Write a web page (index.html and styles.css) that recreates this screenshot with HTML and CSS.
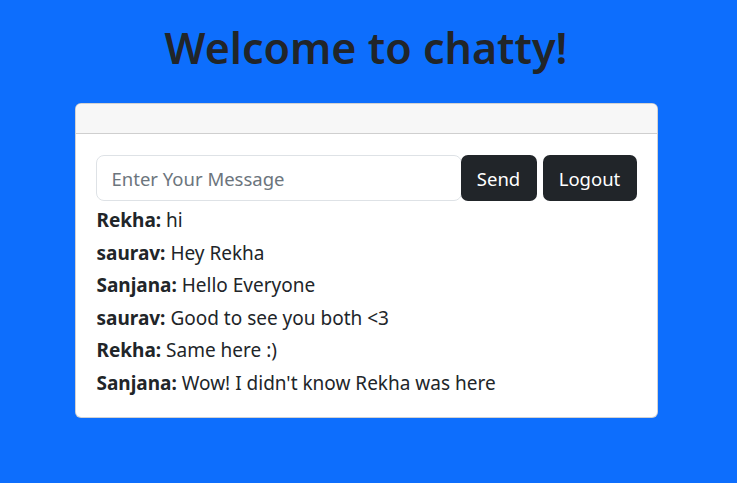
FILE: index.html
```html
<!DOCTYPE html>
<html>
<head>
<meta charset="utf-8">
<link rel="stylesheet" href="styles.css">
</head>
<body>
<div class="page">
  <h1 class="title">Welcome to chatty!</h1>
  <div class="card">
    <div class="card-header"></div>
    <div class="card-body">
      <div class="form-row">
        <input class="msg-input" type="text" placeholder="Enter Your Message">
        <button class="btn">Send</button>
        <button class="btn btn-logout">Logout</button>
      </div>
      <div class="messages">
        <div class="msg"><b>Rekha:</b> hi</div>
        <div class="msg"><b>saurav:</b> Hey Rekha</div>
        <div class="msg"><b>Sanjana:</b> Hello Everyone</div>
        <div class="msg"><b>saurav:</b> Good to see you both &lt;3</div>
        <div class="msg"><b>Rekha:</b> Same here :)</div>
        <div class="msg"><b>Sanjana:</b> Wow! I didn't know Rekha was here</div>
      </div>
    </div>
  </div>
</div>
</body>
</html>
```
FILE: styles.css
```css
html, body {
  margin: 0;
  padding: 0;
  height: 100%;
}
body {
  background: #0d6efd;
  font-family: "Noto Sans", "Open Sans", sans-serif;
  color: #212529;
}
.page {
  display: flex;
  flex-direction: column;
  align-items: center;
  padding-top: 18px;
  padding-right: 5px;
}
.title {
  margin: 0;
  font-size: 43px;
  font-weight: 600;
  line-height: 60px;
  color: #212529;
}
.card {
  margin-top: 25px;
  width: 583px;
  box-sizing: border-box;
  background: #fff;
  border: 1px solid rgba(0,0,0,0.175);
  border-radius: 6px;
  overflow: hidden;
}
.card-header {
  height: 29px;
  background: #f7f7f7;
  border-bottom: 1px solid #cfcfcf;
}
.card-body {
  padding: 21px 20px 18px 20px;
}
.form-row {
  display: flex;
  gap: 6px;
  height: 46px;
}
.msg-input {
  flex: 1;
  margin-right: -7px;
  min-width: 0;
  box-sizing: border-box;
  border: 1px solid #dee2e6;
  border-radius: 8px;
  padding: 0 15px;
  font-family: inherit;
  font-size: 18.5px;
  color: #212529;
  outline: none;
}
.msg-input::placeholder {
  color: #6c757d;
}
.btn {
  position: relative;
  background: #212529;
  color: #fff;
  border: none;
  border-radius: 7px;
  font-family: inherit;
  font-size: 18.5px;
  padding: 0 12px;
  width: 76px;
}
.btn-logout {
  width: 94px;
}
.messages {
  padding-top: 3px;
  padding-left: 1px;
}
.msg {
  font-size: 19px;
  line-height: 32.5px;
}
.msg b {
  font-weight: 700;
}
```
